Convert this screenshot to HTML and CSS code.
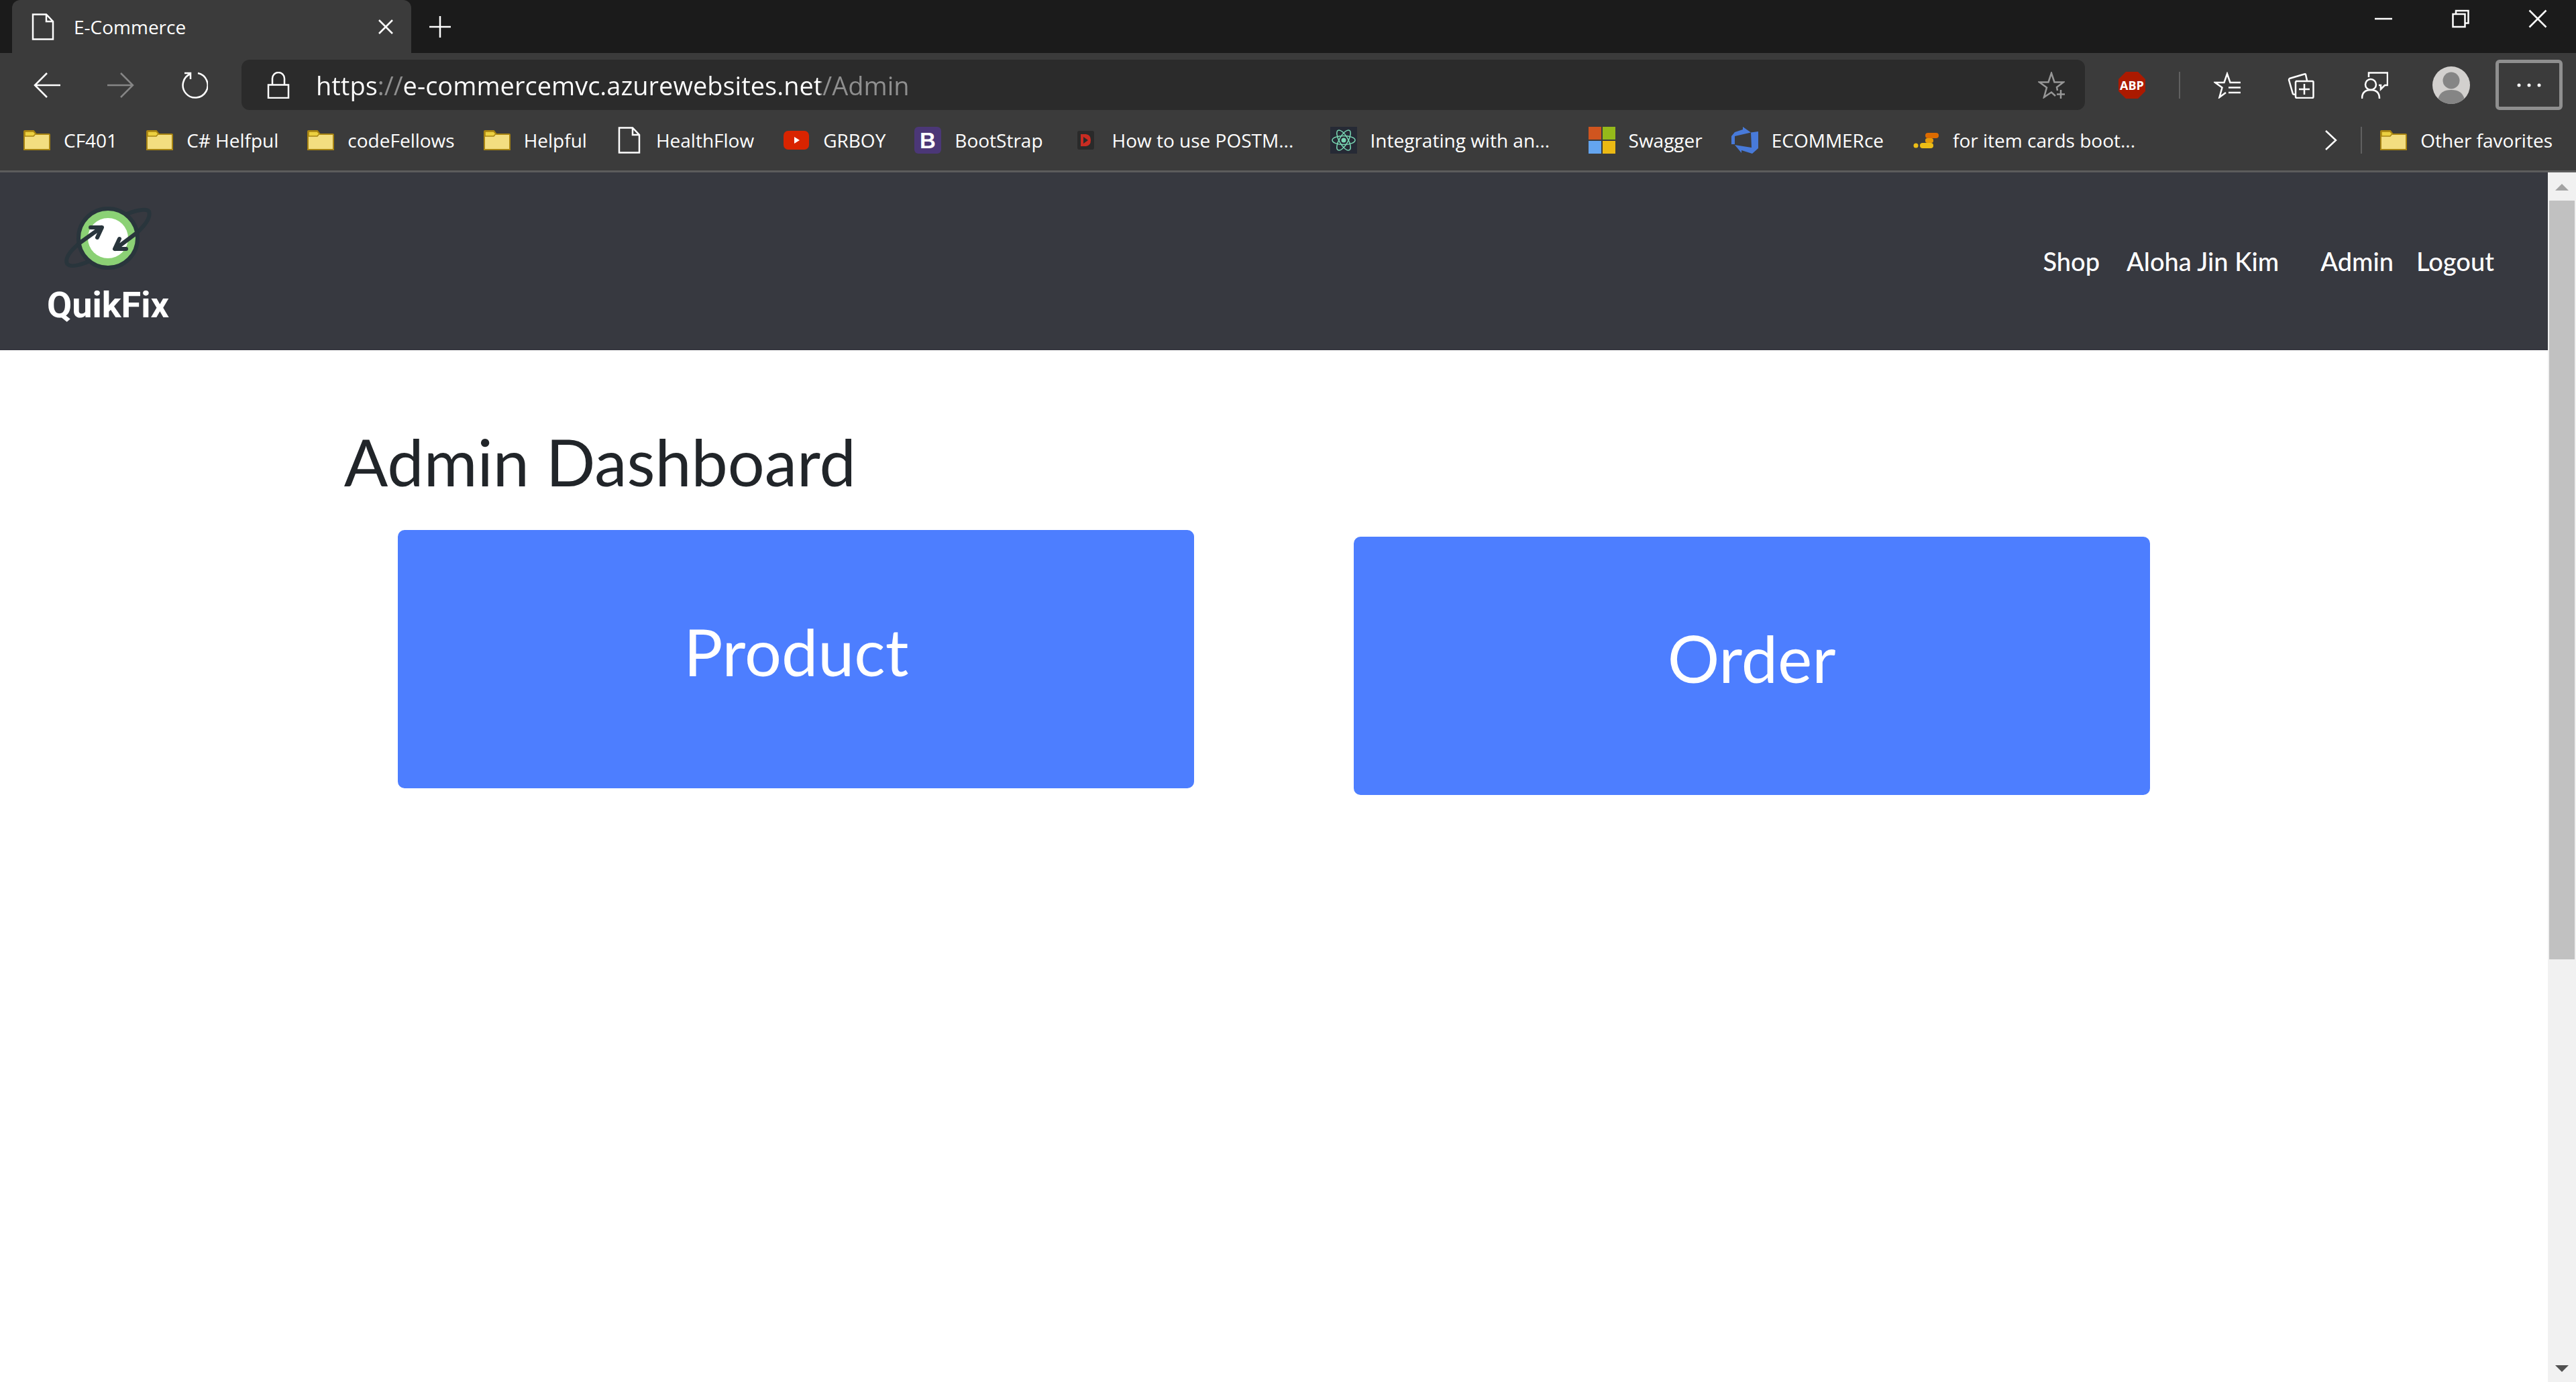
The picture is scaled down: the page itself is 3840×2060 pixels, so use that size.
FILE: index.html
```html
<!DOCTYPE html>
<html lang="en">
<head>
<meta charset="utf-8">
<title>E-Commerce</title>
<link rel="stylesheet" href="styles.css">
</head>
<body>
<svg class="defs" aria-hidden="true">
  <symbol id="page" viewBox="0 0 40 40"><path d="M5 1.500H25L35 12V38.500H5ZM25 1.500V12H35" fill="none" stroke="#fff" stroke-width="2.500"/></symbol>
  <symbol id="folder" viewBox="0 0 40 40"><path d="M1 7Q1 6 2 6H15L19 11H38Q39 11 39 12V34H1Z" fill="#f3de80" stroke="#a88412" stroke-width="2"/><path d="M2 7H15L18 10.500L15 14H2Z" fill="#ecd040" stroke="#a88412" stroke-width="1.500"/></symbol>
</svg>

<header class="browser">
  <div class="tabstrip">
    <div class="tab">
      <svg class="icon"><use href="#page"/></svg>
      <span class="tab-title">E-Commerce</span>
      <button class="tab-close" aria-label="Close tab"><svg class="icon" viewBox="0 0 40 40"><path d="M10 10L30 30M30 10L10 30"/></svg></button>
    </div>
    <button class="new-tab" aria-label="New tab"><svg class="icon" viewBox="0 0 40 40"><path d="M20 4V36M4 20H36"/></svg></button>
    <div class="window-controls">
      <button aria-label="Minimize"><svg class="icon" viewBox="0 0 40 40"><path d="M7 20H33"/></svg></button>
      <button aria-label="Restore"><svg class="icon" viewBox="0 0 40 40"><path d="M8.500 13H26.500V32H8.500ZM13 13V8H31.500V26.500H27"/></svg></button>
      <button aria-label="Close"><svg class="icon" viewBox="0 0 40 40"><path d="M7.500 7.500L32.500 32.500M32.500 7.500L7.500 32.500"/></svg></button>
    </div>
  </div>

  <div class="toolbar">
    <div class="nav-buttons">
      <button aria-label="Back"><svg class="icon" viewBox="0 0 40 40"><path d="M20 2L2 20L20 38M2 20H40"/></svg></button>
      <button class="muted" aria-label="Forward"><svg class="icon" viewBox="0 0 40 40"><path d="M20 2L38 20L20 38M38 20H0"/></svg></button>
      <button aria-label="Refresh"><svg class="icon" viewBox="0 0 40 40"><path d="M25 2A18.500 18.500 0 1 1 14 3M5 2H14V11"/></svg></button>
    </div>
    <form class="address">
      <svg class="icon" viewBox="0 0 40 40"><path d="M5 19.500H35V39H5ZM11 19V10A9 9 0 0 1 29 10V19"/></svg>
      <input class="url" type="text" aria-label="Address" value="https://e-commercemvc.azurewebsites.net/Admin">
      <button class="star" type="button" aria-label="Add to favorites"><svg class="icon" viewBox="0 0 40 40"><path d="M26 36L20 30.500L9 38L13 23.500L2 15.500H15.500L20 2L24.500 15.500H38L28 23L29 28M34 27V40M28 33.500H40"/></svg></button>
    </form>
    <div class="tools">
      <button aria-label="Adblock Plus"><svg class="icon abp" viewBox="0 0 40 40"><path d="M11 0H29L40 11V29L29 40H11L0 29V11Z" fill="#ab1a00" stroke="none"/><text x="20" y="27" text-anchor="middle">ABP</text></svg></button>
      <span class="divider"></span>
      <button aria-label="Favorites"><svg class="icon" viewBox="0 0 40 40"><path d="M40 16H24.500L20 3L15.500 16H2L12.500 23.500L8.500 38L18 31M22 23.500H40M22 31H40"/></svg></button>
      <button aria-label="Collections"><svg class="icon" viewBox="0 0 40 40"><path d="M13 14H37Q38.500 14 38.500 15.500V37Q38.500 39 37 39H14Q12 39 12 37V15.500ZM25 18V34M17 26H33M29 13L27 4Q26.500 3 25 3.500L3 10Q2 10.500 2 12L8 33Q8.500 34 11 33.500"/></svg></button>
      <button aria-label="Profile feedback"><svg class="icon" viewBox="0 0 40 40"><circle cx="14" cy="19" r="8"/><path d="M1 40Q1 27 14 27Q27 27 27 40M11 8V1.500H39V20H35L29 26V20H26"/></svg></button>
      <button class="avatar" aria-label="Account"><svg viewBox="0 0 56 56"><circle cx="28" cy="28" r="28" fill="#d2d0ce"/><circle cx="28" cy="21" r="12.500" fill="#858585"/><path d="M8.500 48Q12 35 28 35Q44 35 47.500 48Q39 56 28 56Q17 56 8.500 48Z" fill="#858585"/></svg></button>
      <button class="more" aria-label="Settings and more"><svg class="icon" viewBox="0 0 40 40"><g fill="#fff" stroke="none"><circle cx="5" cy="20" r="2.500"/><circle cx="20" cy="20" r="2.500"/><circle cx="35" cy="20" r="2.500"/></g></svg></button>
    </div>
  </div>

  <nav class="bookmarks" aria-label="Favorites bar">
    <a href="#"><svg class="icon"><use href="#folder"/></svg>CF401</a>
    <a href="#"><svg class="icon"><use href="#folder"/></svg>C# Helfpul</a>
    <a href="#"><svg class="icon"><use href="#folder"/></svg>codeFellows</a>
    <a href="#"><svg class="icon"><use href="#folder"/></svg>Helpful</a>
    <a href="#"><svg class="icon"><use href="#page"/></svg>HealthFlow</a>
    <a href="#"><svg class="icon" viewBox="0 0 40 40"><rect x="1" y="6" width="38" height="28" rx="7" fill="#d92400" stroke="none"/><path d="M17 15L25 20L17 25Z" fill="#fff" stroke="none"/></svg>GRBOY</a>
    <a href="#"><svg class="icon boot" viewBox="0 0 40 40"><rect width="40" height="40" rx="6" fill="#4b3777" stroke="none"/><text x="20" y="32" text-anchor="middle">B</text></svg>BootStrap</a>
    <a class="long" href="#"><svg class="icon" viewBox="0 0 40 40"><rect x="8" y="6" width="25" height="28" rx="3" fill="#2a2a2a" stroke="none"/><path d="M13 11H21Q28 12 28 20Q28 28 21 29H13ZM17 15V25L24 20Z" fill="#c82c22" fill-rule="evenodd" stroke="none"/></svg><span>How to use POSTM...</span></a>
    <a class="long" href="#"><svg class="icon" viewBox="0 0 40 40"><rect width="40" height="40" fill="#262a35" stroke="none"/><g class="atom"><ellipse cx="20" cy="20" rx="17" ry="6.500"/><ellipse cx="20" cy="20" rx="17" ry="6.500" transform="rotate(60 20 20)"/><ellipse cx="20" cy="20" rx="17" ry="6.500" transform="rotate(120 20 20)"/></g><circle cx="20" cy="20" r="3.500" fill="#79d8b4" stroke="none"/></svg><span>Integrating with an...</span></a>
    <a href="#"><svg class="icon" viewBox="0 0 40 40"><g stroke="none"><path d="M0 0H19V19H0Z" fill="#d0551f"/><path d="M21 0H40V19H21Z" fill="#95b91a"/><path d="M0 21H19V40H0Z" fill="#64a5ef"/><path d="M21 21H40V40H21Z" fill="#ebb914"/></g></svg>Swagger</a>
    <a href="#"><svg class="icon" viewBox="0 0 40 40"><path d="M0 14L5 8L17 4V0L29 8.500L5 14V26L0 26ZM29 8.500L40 7V32L31 40L15 35V39L5 27L30 31Z" fill="#487ad9" stroke="none"/></svg>ECOMMERce</a>
    <a class="long" href="#"><svg class="icon" viewBox="0 0 40 40"><g stroke="none"><rect x="19" y="9" width="20" height="8" rx="4" fill="#dc6b00"/><rect x="19" y="17" width="12" height="7" rx="3" fill="#e59a0a"/><rect x="11" y="24" width="20" height="8" rx="4" fill="#ecbd16"/><circle cx="5" cy="28" r="3.500" fill="#ecbd16"/></g></svg><span>for item cards boot...</span></a>
    <div class="overflow">
      <button aria-label="More favorites"><svg class="icon" viewBox="0 0 40 40"><path d="M15 6L30 20L15 34"/></svg></button>
      <span class="divider"></span>
      <a href="#"><svg class="icon"><use href="#folder"/></svg>Other favorites</a>
    </div>
  </nav>
</header>

<div class="viewport">
  <div class="page">
    <nav class="site-nav" aria-label="Site">
      <a class="brand" href="#">
        <svg viewBox="0 0 132 96" aria-hidden="true">
          <g fill="none" stroke="#29353c" stroke-width="6" stroke-linecap="round">
            <path d="M94 12Q121 2 127 8Q131 20 109 40M39 82Q11 94 5 86Q0 75 24 55"/>
          </g>
          <circle cx="66" cy="48" r="44" fill="#8bd175" stroke="#29353c" stroke-width="6"/>
          <circle cx="66" cy="48" r="30" fill="#fff"/>
          <g fill="none" stroke="#29353c" stroke-width="6" stroke-linecap="round" stroke-linejoin="round">
            <path d="M24 55L56 32M40 32H57L50 47M109 40L77 64M83 49L76 64H93"/>
          </g>
        </svg>
        <span>QuikFix</span>
      </a>
      <div class="links">
        <a href="#">Shop</a>
        <a class="hello" href="#">Aloha Jin Kim</a>
        <a href="#">Admin</a>
        <a href="#">Logout</a>
      </div>
    </nav>
    <main class="container">
      <h1>Admin Dashboard</h1>
      <div class="row">
        <a class="card" href="#">Product</a>
        <a class="card lower" href="#">Order</a>
      </div>
    </main>
  </div>
  <div class="scrollbar" aria-hidden="true">
    <svg viewBox="0 0 42 42"><path d="M11 27L21 17L31 27Z" fill="#a3a3a3"/></svg>
    <div class="track"><div class="thumb"></div></div>
    <svg viewBox="0 0 42 42"><path d="M11 17L21 27L31 17Z" fill="#505050"/></svg>
  </div>
</div>
</body>
</html>
```
FILE: styles.css
```css
* { box-sizing: border-box; }

body {
  margin: 0;
  min-height: 100vh;
  display: flex;
  flex-direction: column;
  background: #fff;
  font-family: "Open Sans", "Noto Sans", sans-serif;
}

a { color: inherit; text-decoration: none; }

button {
  display: flex;
  align-items: center;
  justify-content: center;
  padding: 0;
  border: 0;
  background: none;
  color: inherit;
}

.defs { display: none; }

.icon {
  flex: none;
  width: 40px;
  height: 40px;
  fill: none;
  stroke: currentColor;
  stroke-width: 2.5;
}

/* Browser chrome */
.browser {
  background: #3b3b3b;
  border-bottom: 3px solid #5c5c5c;
  color: #fff;
  font-size: 28px;
  line-height: 38px;
}

.tabstrip {
  display: flex;
  height: 79px;
  padding-left: 18px;
  background: #1b1b1b;
}

.tab {
  display: flex;
  align-items: center;
  gap: 26px;
  width: 595px;
  padding: 0 18px 0 26px;
  border-radius: 12px 12px 0 0;
  background: #3b3b3b;
}

.tab-title { flex: 1; }

.new-tab { width: 86px; }

.window-controls {
  display: flex;
  height: 55px;
  margin-left: auto;
}

.window-controls button { width: 115px; }

.toolbar {
  display: flex;
  align-items: center;
  padding: 10px 20px 10px 50px;
}

.nav-buttons { display: flex; gap: 70px; margin-right: 50px; }

.muted { color: #868686; }

.address {
  display: flex;
  flex: 1;
  align-items: center;
  gap: 36px;
  height: 75px;
  padding: 0 30px 0 35px;
  border-radius: 12px;
  background: #2b2b2b;
}

/* Scheme separator and path are dimmed, host stays bright */
.url {
  flex: 1;
  height: 60px;
  padding: 0;
  border: 0;
  outline: 0;
  background: linear-gradient(to right, #fff 91px, #8f8f8f 91px 129px, #fff 129px 752px, #8f8f8f 752px);
  background-clip: text;
  -webkit-background-clip: text;
  color: transparent;
  font: 38px "Open Sans", "Noto Sans", sans-serif;
}

.star { color: #979797; }

.tools { display: flex; align-items: center; gap: 70px; margin-left: 50px; }

.divider {
  width: 2px;
  height: 40px;
  background: #606060;
}

.tools .divider { margin: 0 -20px; }

.abp text { fill: #fff; stroke: none; font: bold 18px "Open Sans", sans-serif; }
.boot text { fill: #fff; stroke: none; font: bold 33px "Liberation Sans", sans-serif; }

.avatar { margin-left: -4px; }
.avatar svg { width: 56px; height: 56px; }

.more {
  width: 100px;
  height: 75px;
  margin-left: -32px;
  border: 5px solid #8f8f8f;
  border-radius: 6px;
}

.bookmarks {
  display: flex;
  align-items: center;
  gap: 43px;
  padding: 15px 35px 25px;
}

.bookmarks a {
  display: flex;
  align-items: center;
  gap: 20px;
  white-space: nowrap;
}

.long span { width: 282px; }

.atom { stroke: #79d8b4; stroke-width: 1.5; }

.overflow {
  display: flex;
  align-items: center;
  gap: 27px;
  margin-left: auto;
}

/* Web page */
.viewport { display: flex; flex: 1; }

.page {
  flex: 1;
  font-family: Lato, "Open Sans", sans-serif;
}

.site-nav {
  display: flex;
  align-items: center;
  justify-content: space-between;
  height: 265px;
  padding: 0 80px 0 70px;
  border-bottom: 1px solid #34343e;
  background: #373940;
  color: #fff;
}

.brand {
  display: flex;
  flex-direction: column;
  align-items: center;
  gap: 16px;
  padding-top: 20px;
  font: bold 54px/72px Roboto, sans-serif;
}

.brand svg { width: 132px; height: 96px; }

.links {
  display: flex;
  gap: 34px;
  font-size: 38px;
  font-weight: 500;
  line-height: 60px;
}

.hello { margin: 0 28px 0 6px; }

.container {
  width: 75%;
  margin: 0 auto;
  padding-top: 106px;
  color: #212529;
}

h1 {
  margin: 0 38px 42px;
  font-size: 97px;
  font-weight: 400;
  line-height: 120px;
}

.row {
  display: grid;
  grid-template-columns: 1fr 1fr;
  align-items: start;
  justify-items: center;
}

.card {
  width: 1187px;
  max-width: 84%;
  padding: 121px 20px 144px;
  border-radius: 10px;
  background: #4d7eff;
  color: #fff;
  font-size: 97px;
  line-height: 120px;
  text-align: center;
}

.lower { margin-top: 10px; }

.scrollbar {
  display: flex;
  flex-direction: column;
  width: 42px;
  background: #f1f1f1;
}

.scrollbar svg { display: block; height: 42px; }

.track { flex: 1; padding: 0 2px; }

.thumb { height: 65.8%; background: #c1c1c1; }
```
